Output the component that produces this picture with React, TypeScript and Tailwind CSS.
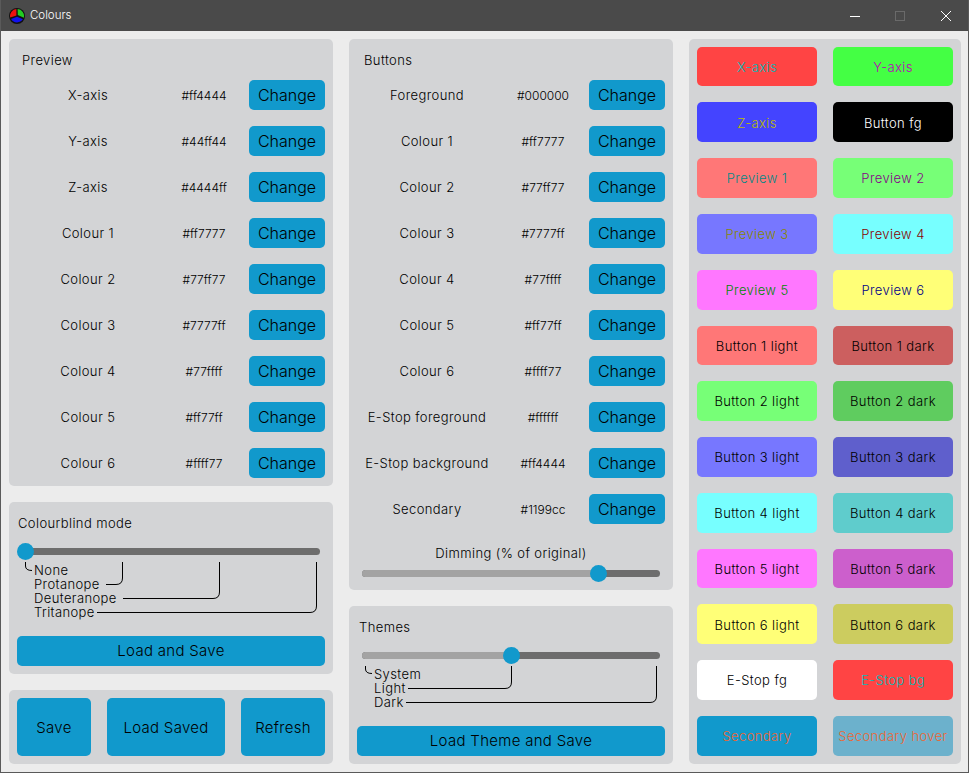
const fontFamily = "font-['Inter','Liberation_Sans',sans-serif]";

type ColourRow = {
  label: string;
  value: string;
};

const previewRows: ColourRow[] = [
  { label: "X-axis", value: "#ff4444" },
  { label: "Y-axis", value: "#44ff44" },
  { label: "Z-axis", value: "#4444ff" },
  { label: "Colour 1", value: "#ff7777" },
  { label: "Colour 2", value: "#77ff77" },
  { label: "Colour 3", value: "#7777ff" },
  { label: "Colour 4", value: "#77ffff" },
  { label: "Colour 5", value: "#ff77ff" },
  { label: "Colour 6", value: "#ffff77" },
];

const buttonRows: ColourRow[] = [
  { label: "Foreground", value: "#000000" },
  { label: "Colour 1", value: "#ff7777" },
  { label: "Colour 2", value: "#77ff77" },
  { label: "Colour 3", value: "#7777ff" },
  { label: "Colour 4", value: "#77ffff" },
  { label: "Colour 5", value: "#ff77ff" },
  { label: "Colour 6", value: "#ffff77" },
  { label: "E-Stop foreground", value: "#ffffff" },
  { label: "E-Stop background", value: "#ff4444" },
  { label: "Secondary", value: "#1199cc" },
];

const swatches = [
  { label: "X-axis", cls: "bg-[#ff4444] text-[#00bbbb]" },
  { label: "Y-axis", cls: "bg-[#44ff44] text-[#bb00bb]" },
  { label: "Z-axis", cls: "bg-[#4444ff] text-[#bbbb00]" },
  { label: "Button fg", cls: "bg-[#000000] text-white" },
  { label: "Preview 1", cls: "bg-[#ff7777] text-[#008888]" },
  { label: "Preview 2", cls: "bg-[#77ff77] text-[#880088]" },
  { label: "Preview 3", cls: "bg-[#7777ff] text-[#888800]" },
  { label: "Preview 4", cls: "bg-[#77ffff] text-[#880000]" },
  { label: "Preview 5", cls: "bg-[#ff77ff] text-[#008800]" },
  { label: "Preview 6", cls: "bg-[#ffff77] text-[#000088]" },
  { label: "Button 1 light", cls: "bg-[#ff7777] text-black" },
  { label: "Button 1 dark", cls: "bg-[#cc5f5f] text-black" },
  { label: "Button 2 light", cls: "bg-[#77ff77] text-black" },
  { label: "Button 2 dark", cls: "bg-[#5fcc5f] text-black" },
  { label: "Button 3 light", cls: "bg-[#7777ff] text-black" },
  { label: "Button 3 dark", cls: "bg-[#5f5fcc] text-black" },
  { label: "Button 4 light", cls: "bg-[#77ffff] text-black" },
  { label: "Button 4 dark", cls: "bg-[#5fcccc] text-black" },
  { label: "Button 5 light", cls: "bg-[#ff77ff] text-black" },
  { label: "Button 5 dark", cls: "bg-[#cc5fcc] text-black" },
  { label: "Button 6 light", cls: "bg-[#ffff77] text-black" },
  { label: "Button 6 dark", cls: "bg-[#cccc5f] text-black" },
  { label: "E-Stop fg", cls: "bg-white text-black" },
  { label: "E-Stop bg", cls: "bg-[#ff4444] text-[#00bbbb]" },
  { label: "Secondary", cls: "bg-[#1199cc] text-[#ee6633]" },
  { label: "Secondary hover", cls: "bg-[#6cb1cc] text-[#ee6633]" },
];

function AppIcon() {
  return (
    <svg width="16" height="16" viewBox="0 0 16 16">
      <circle cx="8" cy="8" r="8" fill="#111" />
      <path d="M7.4 7.4 L1.2 9.6 A7 7 0 0 1 7.4 1 Z" fill="#ee1111" />
      <path d="M8.8 7 L8.6 1 A7 7 0 0 1 14.8 9.8 Z" fill="#22cc22" />
      <path d="M8 8.8 L13.9 11.3 A7 7 0 0 1 2.1 11 Z" fill="#1111ee" />
    </svg>
  );
}

function TitleBar() {
  return (
    <div className="flex h-[31px] items-center bg-[#4a4a4a] text-[#ffffff]">
      <div className="ml-2">
        <AppIcon />
      </div>
      <span className="ml-[5px] pt-px text-[11.5px] font-light leading-none">Colours</span>
      <div className="ml-auto flex items-center pr-[17px]">
        <svg width="10" height="10" viewBox="0 0 10 10" className="mr-[35px]">
          <path d="M0 5.5 H10" stroke="#fff" strokeWidth="1" />
        </svg>
        <svg width="10" height="10" viewBox="0 0 10 10" className="mr-[36px]">
          <rect x="0.5" y="0.5" width="9" height="9" fill="none" stroke="#6a6a6a" />
        </svg>
        <svg width="10" height="10" viewBox="0 0 10 10">
          <path d="M0 0 L10 10 M10 0 L0 10" stroke="#fff" strokeWidth="1" />
        </svg>
      </div>
    </div>
  );
}

function Panel({ className, children }: { className: string; children: React.ReactNode }) {
  return <div className={`rounded-[5px] bg-[#d3d4d6] ${className}`}>{children}</div>;
}

function Button({ className, children }: { className: string; children: React.ReactNode }) {
  return (
    <div className={`flex items-center justify-center rounded-[5px] bg-[#1199cc] text-black ${className}`}>
      {children}
    </div>
  );
}

function Rows({ rows, gridClass }: { rows: ColourRow[]; gridClass: string }) {
  return (
    <div className="mt-[7px] flex flex-col gap-4">
      {rows.map((row) => (
        <div key={row.label} className={`grid h-[30px] items-center ${gridClass}`}>
          <span className="pt-[2px] text-center text-[13px] tracking-[0.4px]">{row.label}</span>
          <span className="pt-[2px] text-center text-[12px]">{row.value}</span>
          <Button className="h-[30px] text-[16px]">Change</Button>
        </div>
      ))}
    </div>
  );
}

function Slider({ fillClass, handleClass }: { fillClass: string; handleClass: string }) {
  return (
    <div className="relative flex h-[17px] items-center px-[5px]">
      <div className="h-[7px] w-full overflow-hidden rounded-full bg-[#6d6d6d]">
        <div className={`h-full bg-[#a3a3a3] ${fillClass}`} />
      </div>
      <div className={`absolute top-0 h-[17px] w-[17px] rounded-full bg-[#1199cc] ${handleClass}`} />
    </div>
  );
}

function Leaders({ paths }: { paths: string[] }) {
  return (
    <svg className="absolute inset-0 h-full w-full" fill="none" stroke="#000" strokeWidth="1">
      {paths.map((d) => (
        <path key={d} d={d} />
      ))}
    </svg>
  );
}

export default function App() {
  return (
    <div className={`flex h-[773px] w-[969px] flex-col border-x border-b border-[#5a5a5a] bg-[#ececec] font-light text-black ${fontFamily}`}>
      <TitleBar />
      <div className="flex flex-1 gap-4 pb-2 pl-2 pr-[7px] pt-2">
        <div className="flex w-[324px] flex-col gap-4">
          <Panel className="h-[447px] p-2">
            <div className="flex h-[26px] items-center pl-[5px] pt-[2px] text-[13px] tracking-[0.4px]">Preview</div>
            <Rows rows={previewRows} gridClass="grid-cols-[142px_90px_76px]" />
          </Panel>
          <Panel className="h-[172px] p-2">
            <div className="flex h-[26px] items-center pl-px pt-[2px] text-[13px] tracking-[0.4px]">Colourblind mode</div>
            <div className="mt-[7px]">
              <Slider fillClass="w-0" handleClass="left-0" />
            </div>
            <div className="relative h-[59px] pl-[17px] pt-[3px] text-[13px] leading-[14px] tracking-[0.4px]">
              <Leaders
                paths={[
                  "M8.5 2 V6 Q8.5 10.5 15 10.5",
                  "M105.5 2 V18 Q105.5 24.5 99 24.5 H89",
                  "M202.5 2 V32 Q202.5 38.5 196 38.5 H106",
                  "M299.5 2 V46 Q299.5 52.5 293 52.5 H80",
                ]}
              />
              <div>None</div>
              <div>Protanope</div>
              <div>Deuteranope</div>
              <div>Tritanope</div>
            </div>
            <Button className="mt-[17px] h-[30px] pt-px text-[15px] tracking-[0.3px]">Load and Save</Button>
          </Panel>
          <Panel className="flex h-[74px] gap-4 p-2">
            <Button className="w-[74px] pt-[2px] text-[15px] tracking-[0.3px]">Save</Button>
            <Button className="w-[118px] pt-[2px] text-[15px] tracking-[0.3px]">Load Saved</Button>
            <Button className="w-[84px] pt-[2px] text-[15px] tracking-[0.3px]">Refresh</Button>
          </Panel>
        </div>

        <div className="flex w-[324px] flex-col gap-4">
          <Panel className="h-[551px] p-2">
            <div className="flex h-[26px] items-center pl-[7px] pt-[2px] text-[13px] tracking-[0.4px]">Buttons</div>
            <Rows rows={buttonRows} gridClass="grid-cols-[140px_92px_76px]" />
            <div className="mt-[19px] flex h-[20px] items-center justify-center pt-[2px] text-[13px] tracking-[0.4px]">
              Dimming (% of original)
            </div>
            <div className="mt-[2px]">
              <Slider fillClass="w-[235px]" handleClass="left-[233px]" />
            </div>
          </Panel>
          <Panel className="h-[158px] p-2">
            <div className="flex h-[26px] items-center pl-[2px] pt-[2px] text-[13px] tracking-[0.4px]">Themes</div>
            <div className="mt-[7px]">
              <Slider fillClass="w-[150px]" handleClass="left-[146px]" />
            </div>
            <div className="relative h-[45px] pl-[17px] pt-[3px] text-[13px] leading-[14px] tracking-[0.4px]">
              <Leaders
                paths={[
                  "M8.5 2 V5 Q8.5 9.5 15 9.5",
                  "M154.5 2 V18 Q154.5 24.5 148 24.5 H51",
                  "M299.5 2 V32 Q299.5 38.5 293 38.5 H49",
                ]}
              />
              <div>System</div>
              <div>Light</div>
              <div>Dark</div>
            </div>
            <Button className="mt-[17px] h-[30px] pt-px text-[15px] tracking-[0.3px]">Load Theme and Save</Button>
          </Panel>
        </div>

        <Panel className="grid w-[272px] grid-cols-2 grid-rows-[repeat(13,minmax(0,1fr))] gap-4 pb-[8.3px] pl-2 pr-2 pt-[7.7px]">
          {swatches.map((swatch) => (
            <div
              key={swatch.label}
              className={`flex items-center justify-center rounded-[5px] pt-[2px] text-[13px] tracking-[0.4px] ${swatch.cls}`}
            >
              {swatch.label}
            </div>
          ))}
        </Panel>
      </div>
    </div>
  );
}
